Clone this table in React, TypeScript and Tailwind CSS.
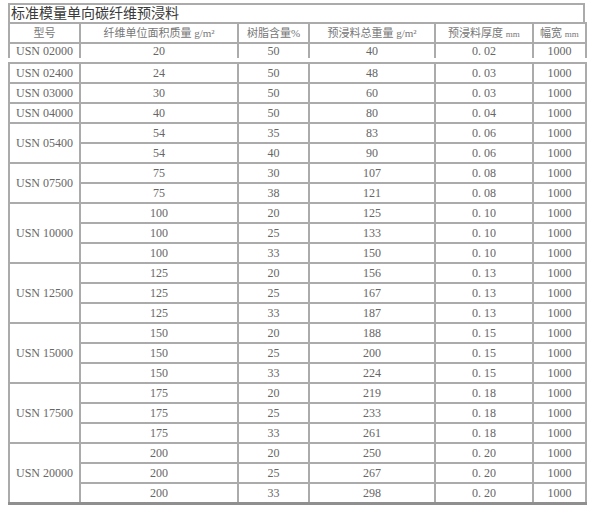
import React from "react";

type Row = [number, number, number, string];
const groups: { name: string; rows: Row[] }[] = [
  { name: "USN 02400", rows: [[24, 50, 48, "0. 03"]] },
  { name: "USN 03000", rows: [[30, 50, 60, "0. 03"]] },
  { name: "USN 04000", rows: [[40, 50, 80, "0. 04"]] },
  { name: "USN 05400", rows: [[54, 35, 83, "0. 06"], [54, 40, 90, "0. 06"]] },
  { name: "USN 07500", rows: [[75, 30, 107, "0. 08"], [75, 38, 121, "0. 08"]] },
  { name: "USN 10000", rows: [[100, 20, 125, "0. 10"], [100, 25, 133, "0. 10"], [100, 33, 150, "0. 10"]] },
  { name: "USN 12500", rows: [[125, 20, 156, "0. 13"], [125, 25, 167, "0. 13"], [125, 33, 187, "0. 13"]] },
  { name: "USN 15000", rows: [[150, 20, 188, "0. 15"], [150, 25, 200, "0. 15"], [150, 33, 224, "0. 15"]] },
  { name: "USN 17500", rows: [[175, 20, 219, "0. 18"], [175, 25, 233, "0. 18"], [175, 33, 261, "0. 18"]] },
  { name: "USN 20000", rows: [[200, 20, 250, "0. 20"], [200, 25, 267, "0. 20"], [200, 33, 298, "0. 20"]] },
];

const font = { fontFamily: '"Liberation Serif", "Noto Sans CJK SC", serif' };

function Cols() {
  return (
    <colgroup>
      <col className="w-[71px]" />
      <col className="w-[158px]" />
      <col className="w-[71px]" />
      <col className="w-[126px]" />
      <col className="w-[98px]" />
      <col className="w-[53px]" />
    </colgroup>
  );
}

const td = "border-2 border-[#ababab] p-0 text-center align-middle";
const td1 = "border-x-2 border-t-2 border-[#ababab] p-0 text-center align-middle h-[14px] leading-[14px]";

export default function App() {
  return (
    <div className="bg-white w-[591px] h-[520px] pl-[8px] pt-[3px] text-[#666]" style={font}>
      <div className="w-[577px] h-[19px] border-t-2 border-l-2 border-r-2 border-[#ababab] text-[14px] leading-[17px] text-[#3a3a3a] pl-[1px]">
        标准模量单向碳纤维预浸料
      </div>
      <table className="table-fixed border-collapse w-[577px] text-[12px]">
        <Cols />
        <tbody>
          <tr className="h-[20px] text-[11px] text-[#777]">
            <td className={td}>型号</td>
            <td className={td}>纤维单位面积质量 g/m²</td>
            <td className={td}>树脂含量%</td>
            <td className={td}>预浸料总重量 g/m²</td>
            <td className={td}>预浸料厚度 <span className="text-[9px]">mm</span></td>
            <td className={td}>幅宽 <span className="text-[9px]">mm</span></td>
          </tr>
          <tr>
            <td className={td1}>USN 02000</td>
            <td className={td1}>20</td>
            <td className={td1}>50</td>
            <td className={td1}>40</td>
            <td className={td1}>0. 02</td>
            <td className={td1}>1000</td>
          </tr>
        </tbody>
      </table>
      <div className="h-[4px]" />
      <table className="table-fixed border-collapse w-[576px] text-[12px] border-b-[3px] border-b-[#8f8f8f]">
        <Cols />
        <tbody>
          {groups.map((g) =>
            g.rows.map((r, i) => (
              <tr key={g.name + i} className="h-[20px]">
                {i === 0 && (
                  <td className={td} rowSpan={g.rows.length}>
                    {g.name}
                  </td>
                )}
                <td className={td}>{r[0]}</td>
                <td className={td}>{r[1]}</td>
                <td className={td}>{r[2]}</td>
                <td className={td}>{r[3]}</td>
                <td className={td}>1000</td>
              </tr>
            ))
          )}
        </tbody>
      </table>
    </div>
  );
}
